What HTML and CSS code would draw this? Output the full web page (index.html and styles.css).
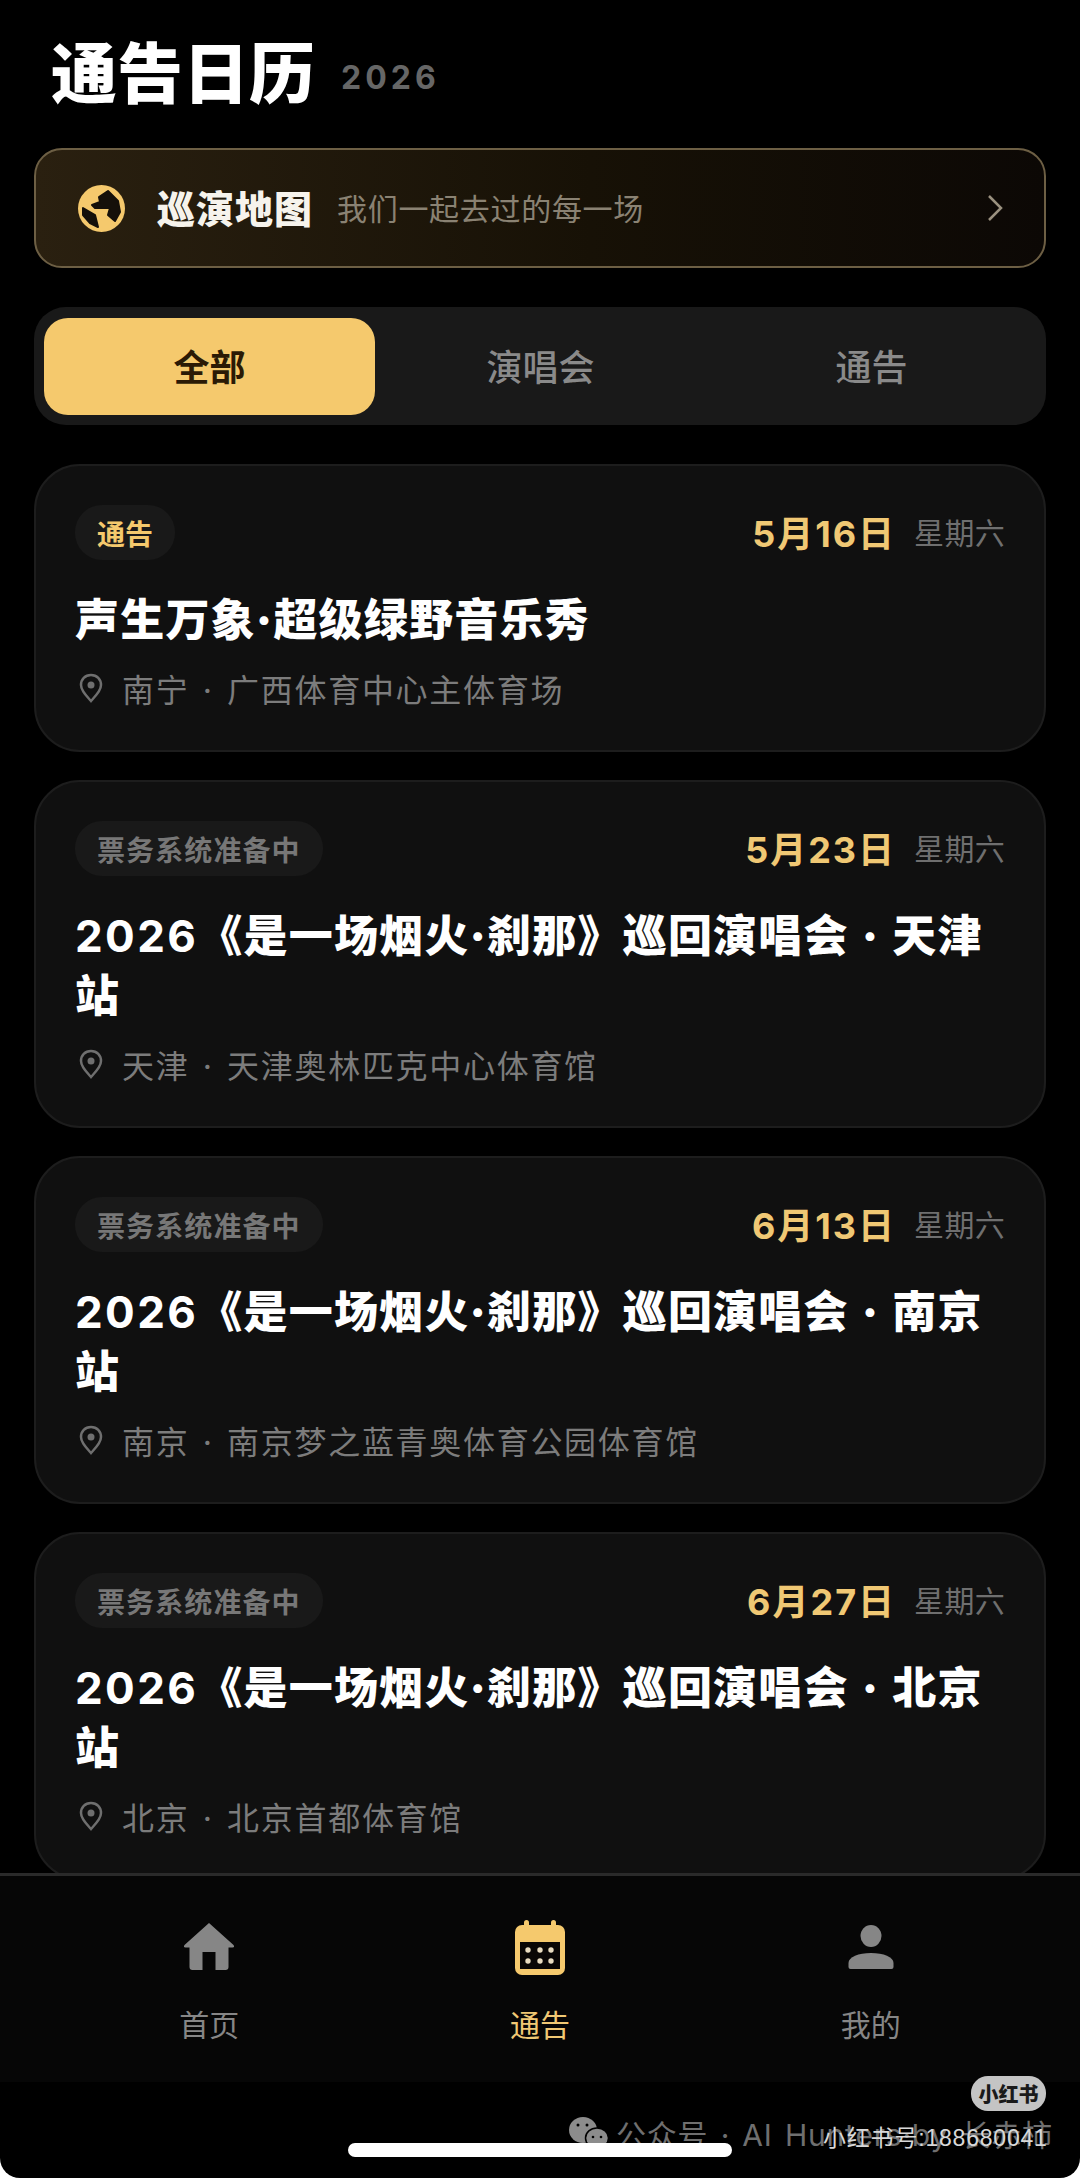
FILE: index.html
```html
<!DOCTYPE html>
<html lang="zh-CN">
<head>
<meta charset="utf-8">
<title>通告日历</title>
<link rel="stylesheet" href="styles.css">
</head>
<body>
<div class="screen">
  <main class="content">
    <header class="header">
      <h1 class="page-title">通告日历</h1>
      <span class="page-year">2026</span>
    </header>

    <section class="banner">
      <svg class="globe" viewBox="0 0 47 47">
        <circle cx="23.5" cy="23.5" r="23.5" fill="#f5c96d"/>
        <path class="globe-land" d="M21 12 30 6 40 16 42 27 37 36 30 30 32 23 17 23 14 20 22 17Z"/>
        <path class="globe-land" d="M5 23 17 30 20 42 12 38 5 30Z"/>
      </svg>
      <span class="banner-title">巡演地图</span>
      <span class="banner-sub">我们一起去过的每一场</span>
      <svg class="chevron" viewBox="0 0 16 28"><path d="M2 2 14 14 2 26"/></svg>
    </section>

    <nav class="tabs">
      <div class="tab tab-active">全部</div>
      <div class="tab">演唱会</div>
      <div class="tab">通告</div>
    </nav>

    <section class="cards">
      <article class="card">
        <div class="card-top">
          <span class="tag tag-gold">通告</span>
          <div class="when"><span class="date">5月16日</span><span class="weekday">星期六</span></div>
        </div>
        <h2 class="card-title">声生万象·超级绿野音乐秀</h2>
        <div class="meta">
          <svg class="pin" viewBox="0 0 24 30"><path d="M12 2C6 2 2 6.5 2 12c0 6 6 11.500 10 16 4-4.500 10-10 10-16C22 6.500 18 2 12 2Z"/><circle cx="12" cy="12" r="3.500"/></svg>
          <span>南宁 · 广西体育中心主体育场</span>
        </div>
      </article>

      <article class="card">
        <div class="card-top">
          <span class="tag">票务系统准备中</span>
          <div class="when"><span class="date">5月23日</span><span class="weekday">星期六</span></div>
        </div>
        <h2 class="card-title"><span class="num">2026</span>《是一场烟火·刹那》巡回演唱会 · 天津站</h2>
        <div class="meta">
          <svg class="pin" viewBox="0 0 24 30"><path d="M12 2C6 2 2 6.500 2 12c0 6 6 11.500 10 16 4-4.500 10-10 10-16C22 6.500 18 2 12 2Z"/><circle cx="12" cy="12" r="3.500"/></svg>
          <span>天津 · 天津奥林匹克中心体育馆</span>
        </div>
      </article>

      <article class="card">
        <div class="card-top">
          <span class="tag">票务系统准备中</span>
          <div class="when"><span class="date">6月13日</span><span class="weekday">星期六</span></div>
        </div>
        <h2 class="card-title"><span class="num">2026</span>《是一场烟火·刹那》巡回演唱会 · 南京站</h2>
        <div class="meta">
          <svg class="pin" viewBox="0 0 24 30"><path d="M12 2C6 2 2 6.500 2 12c0 6 6 11.500 10 16 4-4.500 10-10 10-16C22 6.500 18 2 12 2Z"/><circle cx="12" cy="12" r="3.500"/></svg>
          <span>南京 · 南京梦之蓝青奥体育公园体育馆</span>
        </div>
      </article>

      <article class="card">
        <div class="card-top">
          <span class="tag">票务系统准备中</span>
          <div class="when"><span class="date">6月27日</span><span class="weekday">星期六</span></div>
        </div>
        <h2 class="card-title"><span class="num">2026</span>《是一场烟火·刹那》巡回演唱会 · 北京站</h2>
        <div class="meta">
          <svg class="pin" viewBox="0 0 24 30"><path d="M12 2C6 2 2 6.500 2 12c0 6 6 11.500 10 16 4-4.500 10-10 10-16C22 6.500 18 2 12 2Z"/><circle cx="12" cy="12" r="3.500"/></svg>
          <span>北京 · 北京首都体育馆</span>
        </div>
      </article>
    </section>
  </main>

  <footer class="tabbar">
    <div class="tabbar-item">
      <svg class="tabbar-icon" viewBox="-4.500 -3 60 55"><path class="fill-grey" d="M25.500 0 50 22Q51.500 24.500 49 24.500H45V44Q45 47 42 47H32V29H19V47H9Q6 47 6 44V24.500H2Q-.5 24.500 1 22Z"/></svg>
      <span class="tabbar-label">首页</span>
    </div>
    <div class="tabbar-item tabbar-item-active">
      <svg class="tabbar-icon" viewBox="-5 0 60 55">
        <rect class="fill-gold" x="9" y="0" width="5" height="10" rx="2.500"/>
        <rect class="fill-gold" x="36" y="0" width="5" height="10" rx="2.500"/>
        <rect class="fill-gold" x="0" y="5" width="50" height="50" rx="7"/>
        <rect x="5" y="22" width="40" height="27" fill="#0a0705"/>
        <g fill="#e9dcc0">
          <circle cx="13" cy="30" r="2.700"/><circle cx="25" cy="30" r="2.700"/><circle cx="36" cy="30" r="2.700"/>
          <circle cx="13" cy="41" r="2.700"/><circle cx="25" cy="41" r="2.700"/><circle cx="36" cy="41" r="2.700"/>
        </g>
      </svg>
      <span class="tabbar-label">通告</span>
    </div>
    <div class="tabbar-item">
      <svg class="tabbar-icon" viewBox="-7.500 -5 60 55">
        <ellipse class="fill-grey" cx="22.500" cy="11" rx="10.500" ry="11"/>
        <path class="fill-grey" d="M0 38C0 32 10 28 22.500 28S45 32 45 38V42Q45 44 43 44H2Q0 44 0 42Z"/>
      </svg>
      <span class="tabbar-label">我的</span>
    </div>
  </footer>

  <div class="wm-badge">小红书</div>
  <div class="wm-wechat">
    <svg class="wm-icon" viewBox="0 0 42 34">
      <ellipse cx="15" cy="14" rx="14" ry="13" fill="#8c8c8c"/>
      <ellipse cx="29" cy="22" rx="11.500" ry="10" fill="#8c8c8c" stroke="#000" stroke-width="1.500"/>
      <circle cx="10" cy="9" r="1.500" fill="#000"/><circle cx="19" cy="9" r="1.500" fill="#000"/>
      <circle cx="25" cy="21" r="1.300" fill="#000"/><circle cx="33" cy="21" r="1.300" fill="#000"/>
    </svg>
    <span>公众号 · AI Hunters·by 长赤柿</span>
  </div>
  <div class="wm-id">小红书号:188680041</div>
  <div class="home-indicator"></div>
</div>
</body>
</html>
```
FILE: styles.css
```css
* { box-sizing: border-box; }
html, body { margin: 0; padding: 0; background: #fff; }
body {
  width: 1080px;
  height: 2178px;
  font-family: Inter, "Noto Sans CJK SC", sans-serif;
  color: #fff;
}
h1, h2 { margin: 0; }

.screen {
  position: relative;
  width: 1080px;
  height: 2178px;
  background: #000;
  border-radius: 0 0 20px 20px;
  overflow: hidden;
  display: flex;
  flex-direction: column;
}
.content {
  height: 1873px;
  overflow: hidden;
  padding: 0 34px;
  flex: none;
}

.header {
  height: 148px;
  padding: 32px 0 0 17px;
  display: flex;
  align-items: flex-start;
  gap: 26px;
}
.page-title {
  font-size: 66px;
  line-height: 84px;
  font-weight: 900;
  letter-spacing: 0;
}
.page-year {
  margin-top: 24px;
  font-size: 32px;
  line-height: 44px;
  font-weight: 700;
  letter-spacing: 4px;
  color: #666;
}

.banner {
  height: 120px;
  display: flex;
  align-items: center;
  padding: 0 42px;
  border: 2px solid #6d5f44;
  border-radius: 28px;
  background: linear-gradient(90deg, #2a2010 0%, #171106 55%, #0c0805 100%);
}
.globe { width: 47px; height: 47px; flex: none; }
.globe-land { fill: #15100a; stroke: #15100a; stroke-width: 2; stroke-linejoin: round; }
.banner-title {
  margin-left: 32px;
  margin-bottom: 3px;
  font-size: 38px;
  font-weight: 900;
  letter-spacing: 1px;
  color: #f6f3ec;
}
.banner-sub {
  margin-left: 24px;
  margin-bottom: 3px;
  font-size: 30px;
  letter-spacing: .7px;
  color: #8a8273;
}
.chevron { width: 16px; height: 28px; margin-left: auto; margin-right: -1px; flex: none; }
.chevron path { fill: none; stroke: #9a917f; stroke-width: 2.500; }

.tabs {
  margin-top: 39px;
  height: 118px;
  padding: 11px 9px 10px 10px;
  display: grid;
  grid-template-columns: 1fr 1fr 1fr;
  background: #191919;
  border-radius: 32px;
}
.tab {
  display: flex;
  align-items: center;
  justify-content: center;
  padding-bottom: 4px;
  font-size: 36px;
  font-weight: 500;
  color: #8a8a8a;
  border-radius: 24px;
}
.tab-active {
  background: #f5c96d;
  color: #2b1a05;
  font-weight: 700;
}

.cards {
  margin-top: 39px;
  display: flex;
  flex-direction: column;
  gap: 28px;
}
.card {
  padding: 39px 39px 40px 39px;
  background: #101010;
  border: 2px solid #1d1d1d;
  border-radius: 46px;
}
.card-top {
  height: 55px;
  display: flex;
  align-items: center;
  justify-content: space-between;
}
.tag {
  height: 55px;
  padding: 0 22px;
  display: flex;
  align-items: center;
  font-size: 28px;
  font-weight: 700;
  letter-spacing: 1.100px;
  color: #777;
  background: #191919;
  border-radius: 27px;
}
.tag-gold { color: #f5c96d; letter-spacing: 0; }
.when { display: flex; align-items: center; gap: 18px; }
.date {
  padding-bottom: 3px;
  font-size: 36px;
  font-weight: 700;
  letter-spacing: 2px;
  color: #f0c874;
}
.weekday { padding-bottom: 3px; font-size: 30px; letter-spacing: .3px; color: #6f6f6f; }
.card-title {
  margin-top: 30px;
  font-size: 44px;
  line-height: 60px;
  font-weight: 900;
  letter-spacing: 1.200px;
  word-spacing: 3px;
  color: #fff;
}
.num { font-weight: 700; letter-spacing: 2.400px; }
.meta {
  margin-top: 16px;
  height: 44px;
  display: flex;
  align-items: center;
  gap: 19px;
  font-size: 32px;
  letter-spacing: 1.700px;
  word-spacing: 2.700px;
  color: #7c7c7c;
}
.pin { width: 24px; height: 30px; margin-left: 4px; flex: none; }
.pin path { fill: none; stroke: #6f6f6f; stroke-width: 2.500; }
.pin circle { fill: #6f6f6f; }

.tabbar {
  height: 209px;
  flex: none;
  padding: 44px 44px 0;
  display: grid;
  grid-template-columns: 1fr 1fr 1fr;
  align-content: start;
  background: #060606;
  border-top: 3px solid #2a2a2a;
}
.tabbar-item {
  height: 125px;
  display: flex;
  flex-direction: column;
  align-items: center;
  gap: 30px;
  color: #868686;
}
.tabbar-icon { height: 55px; width: 60px; flex: none; }
.tabbar-label { font-size: 30px; line-height: 40px; }
.tabbar-item-active { color: #f0c874; }
.fill-grey { fill: #868686; }
.fill-gold { fill: #f5c96d; }

.wm-badge {
  position: absolute;
  left: 971px;
  top: 2076px;
  width: 75px;
  height: 35px;
  display: flex;
  align-items: center;
  justify-content: center;
  font-size: 20px;
  font-weight: 900;
  color: #1a1a1a;
  background: #c4c4c4;
  border-radius: 17px;
}
.wm-wechat {
  position: absolute;
  left: 568px;
  top: 2110px;
  height: 46px;
  display: flex;
  align-items: center;
  gap: 6px;
  font-size: 30px;
  word-spacing: 3px;
  letter-spacing: .8px;
  color: #6f6f6f;
  white-space: nowrap;
}
.wm-icon { width: 42px; height: 34px; flex: none; }
.wm-id {
  position: absolute;
  left: 823px;
  top: 2120px;
  font-family: "Liberation Sans", "Noto Sans CJK SC", sans-serif;
  font-size: 23px;
  line-height: 36px;
  letter-spacing: .8px;
  color: #d8d8d8;
  white-space: nowrap;
}
.home-indicator {
  position: absolute;
  left: 348px;
  top: 2143px;
  width: 384px;
  height: 14px;
  background: #fff;
  border-radius: 7px;
}
```
